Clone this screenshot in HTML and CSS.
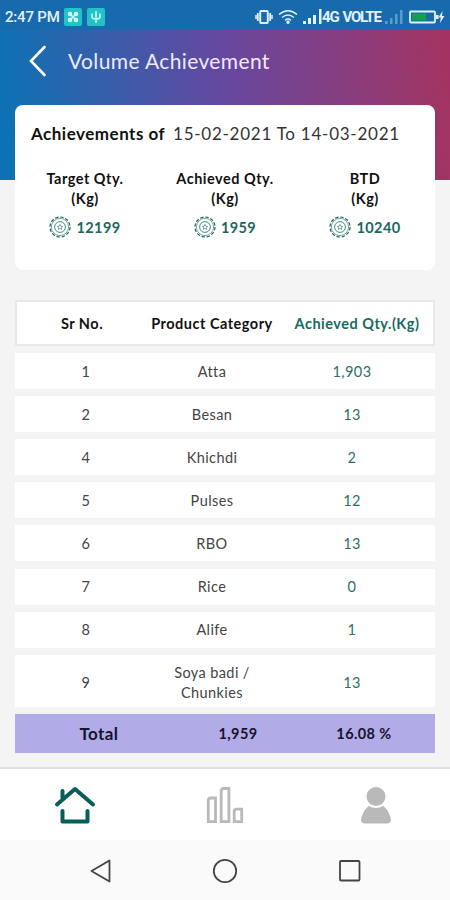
FILE: index.html
```html
<!DOCTYPE html>
<html lang="en">
  <head>
    <meta charset="utf-8" />
    <meta name="viewport" content="width=device-width, initial-scale=1" />
    <title>Volume Achievement</title>
    <link rel="stylesheet" href="styles.css">
  </head>

  <body>
    <!-- shared seal icon for the quantity figures -->
    <svg class="defs" width="0" height="0">
      <symbol id="seal" viewBox="0 0 22 22">
        <circle cx="11" cy="11" r="10" stroke-width="1.2" stroke-dasharray="3.4 1.83" />
        <circle cx="11" cy="11" r="8.6" stroke-width="0.6" />
        <circle cx="11" cy="11" r="5.4" stroke-width="0.8" />
        <path d="M11 8.500l.8 1.700 1.900.2-1.400 1.200.4 1.800-1.700-.9-1.700.9.4-1.800-1.400-1.200 1.900-.2z" stroke-width="0.6" />
      </symbol>
    </svg>

    <div class="status-bar">
      <span class="time">2:47 PM</span>
      <span class="badge">
        <svg width="18" height="18" viewBox="0 0 18 18">
          <path d="M5 5l8 8M13 5l-8 8" />
          <circle cx="6" cy="6" r="1.500" /><circle cx="12" cy="6" r="1.500" />
          <circle cx="6" cy="12" r="1.500" /><circle cx="12" cy="12" r="1.500" />
        </svg>
      </span>
      <span class="badge">
        <svg width="18" height="18" viewBox="0 0 18 18">
          <path d="M9 3v12M5 5.500v3.500q0 1.800 4 1.800t4-1.800V5.500" />
        </svg>
      </span>
      <div class="status-icons">
        <svg width="18" height="16" viewBox="0 0 18 16" fill="none" stroke="#e3f1fa">
          <rect x="5.200" y="2" width="7.600" height="12" rx="1" stroke-width="2" />
          <path d="M2.800 4v8M15.200 4v8" stroke-width="1.800" /><path d="M1 6v4M17 6v4" stroke-width="1.500" />
        </svg>
        <svg class="wifi" width="20" height="16" viewBox="0 0 20 16" fill="none" stroke="#e3f1fa" stroke-width="1.500">
          <path d="M1 5.500Q10-2 19 5.500M4 8.500q6-5 12 0M7 11.300q3-2.500 6 0" />
          <circle cx="10" cy="13.300" r="1" fill="#e3f1fa" />
        </svg>
        <svg class="signal" width="19" height="16" viewBox="0 0 19 16" fill="#e3f1fa">
          <path d="M0 12h3v3H0zM5 9h3v6H5zM10 6h3v9h-3zM16 0h2.500v15H16z" />
        </svg>
        <span class="network"><b>4G</b> <b>VOLTE</b></span>
        <svg class="signal-off" width="18" height="16" viewBox="0 0 18 16" fill="#5d9bcb">
          <path d="M0 12h2.500v3H0zM5 9h2.500v6H5zM10 5h2.500v10H10zM15 1h2.500v14H15z" />
        </svg>
        <svg class="battery" width="36" height="14" viewBox="0 0 36 14">
          <rect x="1" y="1.500" width="25" height="11" rx="1" fill="none" stroke="#e3f1fa" stroke-width="1.800" />
          <rect x="3" y="3.500" width="14" height="7" fill="#12a050" />
          <path d="M27 5h2.500v4H27zM33.500 1l-4 6.500h2.300L31 13l4.500-7h-2.500z" fill="#e3f1fa" />
        </svg>
      </div>
    </div>

    <header class="hero">
      <svg class="back" width="18" height="32" viewBox="0 0 18 32">
        <path d="M15.500 2L2 16l13.500 14" />
      </svg>
      <h1>Volume Achievement</h1>
    </header>

    <main>
      <section class="summary">
        <p class="period"><b>Achievements of</b> <span>15-02-2021 To 14-03-2021</span></p>
        <div class="stats">
          <div class="stat">
            <h2>Target Qty.<br>(Kg)</h2>
            <p><svg class="seal"><use href="#seal" /></svg>12199</p>
          </div>
          <div class="stat">
            <h2>Achieved Qty.<br>(Kg)</h2>
            <p><svg class="seal"><use href="#seal" /></svg>1959</p>
          </div>
          <div class="stat">
            <h2>BTD<br>(Kg)</h2>
            <p><svg class="seal"><use href="#seal" /></svg>10240</p>
          </div>
        </div>
      </section>

      <section class="table">
        <div class="row head"><span>Sr No.</span><span>Product Category</span><span class="qty">Achieved Qty.(Kg)</span></div>
        <div class="row"><span>1</span><span>Atta</span><span class="qty">1,903</span></div>
        <div class="row"><span>2</span><span>Besan</span><span class="qty">13</span></div>
        <div class="row"><span>4</span><span>Khichdi</span><span class="qty">2</span></div>
        <div class="row"><span>5</span><span>Pulses</span><span class="qty">12</span></div>
        <div class="row"><span>6</span><span>RBO</span><span class="qty">13</span></div>
        <div class="row"><span>7</span><span>Rice</span><span class="qty">0</span></div>
        <div class="row"><span>8</span><span>Alife</span><span class="qty">1</span></div>
        <div class="row tall"><span>9</span><span>Soya badi /<br>Chunkies</span><span class="qty">13</span></div>
        <div class="row total"><span class="label">Total</span><span>1,959</span><span>16.08 %</span></div>
      </section>
    </main>

    <nav class="tabs">
      <svg width="42" height="38" viewBox="0 0 42 38" fill="none" stroke="#075e57" stroke-width="4" stroke-linecap="round" stroke-linejoin="round">
        <path d="M3 18.500L21 3l18 15.500M8.500 12V5M8.500 25v10.500h25V25" />
      </svg>
      <svg width="38" height="38" viewBox="0 0 38 38" fill="none" stroke="#b9b9b9" stroke-width="2.800">
        <path d="M2.300 35.700V14.500q0-2.500 2.500-2.500h4.700v23.700zM15.200 35.700V5q0-2.500 2.500-2.500h5.200v33.200zM28.200 35.700v-10q0-2.500 2.500-2.500h5v12.500z" />
      </svg>
      <svg class="user" width="32" height="38" viewBox="0 0 32 38" fill="#b9b9b9">
        <circle cx="16" cy="10.500" r="9.500" />
        <path d="M9 20q7 4 14 0 4 2 7.500 11 1.500 6-3 6.500h-23q-4.500-.5-3-6.500Q5 22 9 20z" />
      </svg>
    </nav>

    <div class="system-nav">
      <svg width="24" height="26" viewBox="0 0 24 26"><path d="M20.500 2.500v21L2.500 13z" /></svg>
      <svg width="26" height="26" viewBox="0 0 26 26"><circle cx="13" cy="13" r="11.200" /></svg>
      <svg width="24" height="26" viewBox="0 0 24 26"><rect x="2" y="3" width="19.500" height="19.500" rx="1" /></svg>
    </div>
  </body>
</html>
```
FILE: styles.css
```css
* {
  box-sizing: border-box;
}
body {
  margin: 0;
  height: 900px;
  display: flex;
  flex-direction: column;
  background-color: #f4f4f4;
  font-family: Lato, "Noto Sans", sans-serif;
  color: #111;
}
h1, h2, p {
  margin: 0;
}
.defs {
  position: absolute;
}

/* status bar */
.status-bar {
  height: 30px;
  padding: 3px 5px 0;
  display: flex;
  align-items: center;
  background-color: #176bad;
  color: #e3f1fa;
  font-family: Roboto, sans-serif;
}
.time {
  width: 59px;
  font-size: 15px;
  font-weight: 500;
  letter-spacing: -0.2px;
  white-space: nowrap;
}
.badge {
  width: 18px;
  height: 18px;
  margin-right: 5px;
  border-radius: 2px;
  background-color: #22c3c6;
}
.badge svg {
  display: block;
  fill: none;
  stroke: #d8ffff;
  stroke-width: 1.5;
}
.status-icons {
  margin-left: auto;
  display: flex;
  align-items: center;
}
.wifi {
  margin-left: 5px;
}
.signal {
  margin-left: 5px;
}
.network {
  width: 58px;
  font-size: 15px;
  letter-spacing: -1.2px;
  word-spacing: 1.5px;
  white-space: nowrap;
}
.network b {
  font-weight: 700;
}
.signal-off {
  margin-left: 5px;
}
.battery {
  margin-left: 6px;
}

/* gradient header, the summary card overlaps its lower half */
.hero {
  height: 150px;
  padding: 15px 0 0 29px;
  display: flex;
  align-items: flex-start;
  background: linear-gradient(83deg, #0d72b3 3%, #6548a0 50%, #a33462 98%);
}
.back {
  fill: none;
  stroke: #fff;
  stroke-width: 2.6;
  stroke-linecap: round;
}
.hero h1 {
  margin-left: 21px;
  line-height: 32px;
  font-size: 21px;
  font-weight: 400;
  letter-spacing: 0.38px;
  color: #f0eaff;
}

main {
  flex: 1;
  margin-top: -75px;
  padding: 0 15px;
}
.summary {
  height: 165px;
  padding-top: 17px;
  border-radius: 8px;
  background-color: #fff;
}
.period {
  padding-left: 16px;
  line-height: 24px;
  font-size: 17px;
  letter-spacing: 0.5px;
  white-space: nowrap;
}
.period span {
  margin-left: 3px;
  letter-spacing: 0.75px;
  color: #333;
}
.stats {
  display: grid;
  grid-template-columns: 140px 140px 140px;
  margin-top: 23px;
  text-align: center;
}
.stat h2 {
  line-height: 20px;
  font-size: 14.5px;
  letter-spacing: 0.5px;
}
.stat p {
  display: flex;
  align-items: center;
  justify-content: center;
  gap: 5px;
  margin-top: 7px;
  font-size: 14.5px;
  font-weight: 700;
  letter-spacing: 0.4px;
  color: #1a685e;
}
.seal {
  width: 22px;
  height: 22px;
  fill: none;
  stroke: #1a685e;
}

/* product table */
.table {
  margin-top: 30px;
}
.row {
  display: grid;
  grid-template-columns: 142px 110px 170px;
  align-items: center;
  height: 36px;
  padding-top: 1px;
  margin-bottom: 7.1px;
  overflow: hidden;
  background-color: #fff;
  font-size: 14.5px;
  letter-spacing: 0.4px;
  line-height: 20px;
  text-align: center;
  color: #444;
}
.row .qty {
  color: #2b7064;
}
.row.head {
  grid-template-columns: 130px 130px 160px;
  height: 46px;
  padding-top: 2px;
  border: 2px solid #e8e8e8;
  font-weight: 700;
  letter-spacing: 0.5px;
  white-space: nowrap;
  color: #111;
}
.row.head .qty {
  color: #176b60;
}
.row.tall {
  height: 52px;
  padding-top: 5px;
}
.row.total {
  grid-template-columns: 168px 110px 142px;
  height: 39px;
  padding-top: 2px;
  margin-bottom: 0;
  background-color: #b1ace8;
  font-weight: 700;
  color: #16132c;
}
.row.total .label {
  font-size: 17px;
}

/* bottom bars */
.tabs {
  height: 73px;
  border-top: 2px solid #e0e0e0;
  display: grid;
  grid-template-columns: repeat(3, 1fr);
  align-items: center;
  justify-items: center;
  background-color: #fff;
}
.tabs .user {
  margin-left: 1px;
}
.system-nav {
  height: 60px;
  padding: 0 38px;
  display: grid;
  grid-template-columns: repeat(3, 1fr);
  align-items: center;
  justify-items: center;
  background-color: #fafafa;
}
.system-nav svg {
  margin: 1px 0 0 1px;
  fill: none;
  stroke: #444;
  stroke-width: 1.8;
  stroke-linejoin: round;
}
```
